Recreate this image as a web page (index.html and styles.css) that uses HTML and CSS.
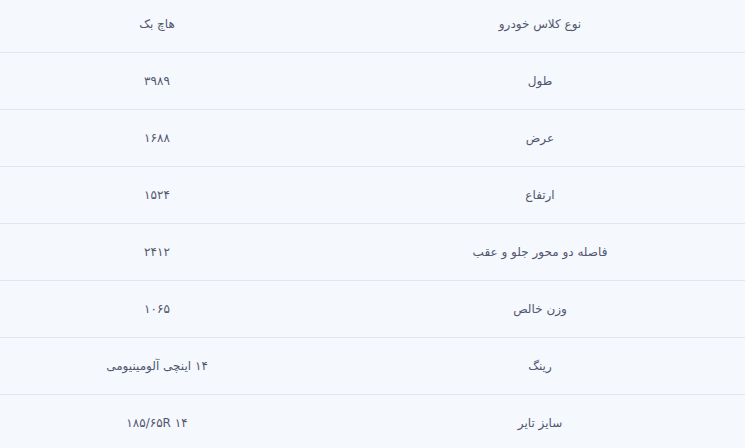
FILE: index.html
```html
<!DOCTYPE html>
<html lang="fa" dir="rtl">
<head>
<meta charset="utf-8">
<link rel="stylesheet" href="styles.css">
</head>
<body>
<div class="specs">
  <div class="row"><div class="label">نوع کلاس خودرو</div><div class="value">هاچ بک</div></div>
  <div class="row"><div class="label">طول</div><div class="value">۳۹۸۹</div></div>
  <div class="row"><div class="label">عرض</div><div class="value">۱۶۸۸</div></div>
  <div class="row"><div class="label">ارتفاع</div><div class="value">۱۵۲۴</div></div>
  <div class="row"><div class="label">فاصله دو محور جلو و عقب</div><div class="value">۲۴۱۲</div></div>
  <div class="row"><div class="label">وزن خالص</div><div class="value">۱۰۶۵</div></div>
  <div class="row"><div class="label">رینگ</div><div class="value">۱۴ اینچی آلومینیومی</div></div>
  <div class="row"><div class="label">سایز تایر</div><div class="value"><span class="ltr">۱۸۵/۶۵R ۱۴</span></div></div>
</div>
</body>
</html>
```

FILE: styles.css
```css
html, body {
  margin: 0;
  padding: 0;
  background: #f5f8fd;
}
body {
  font-family: "DejaVu Sans", sans-serif;
  font-size: 12px;
  color: #52566f;
  overflow: hidden;
}
.specs {
  margin-top: -4px;
}
.row {
  display: grid;
  grid-template-columns: 410px 1fr;
  height: 56px;
  border-bottom: 1px solid #e1e5ee;
  align-items: center;
}
.label {
  text-align: center;
}
.value {
  text-align: center;
  padding-right: 21px;
}
.ltr {
  direction: ltr;
  unicode-bidi: isolate;
}
```
